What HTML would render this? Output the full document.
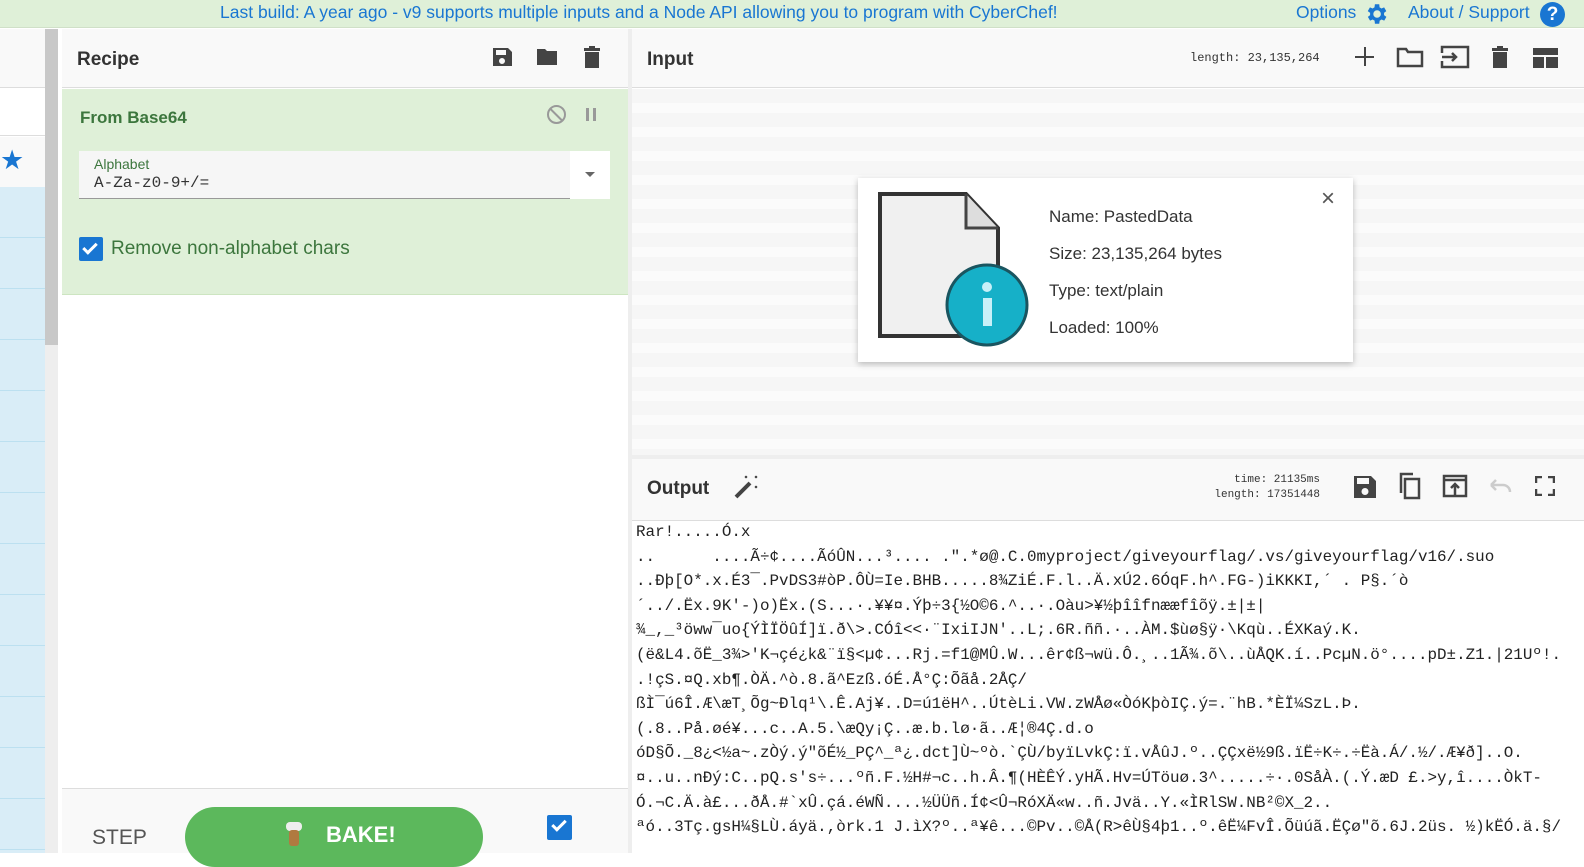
<!DOCTYPE html>
<html><head><meta charset="utf-8"><style>
*{box-sizing:border-box;margin:0;padding:0}
body{width:1584px;height:853px;overflow:hidden;font-family:"Liberation Sans",sans-serif;background:#fff;position:relative}
.abs{position:absolute}
#banner{left:0;top:0;width:1584px;height:28px;background:#dff0d8;border-bottom:1px solid #d0e0c8}
#banner span{position:absolute;top:2px;font-size:17.5px;color:#1976d2}
.mono{font-family:"Liberation Mono",monospace}
.hdr{font-size:19px;font-weight:bold;color:#333}
.out{position:absolute;left:636px;font-family:"Liberation Mono",monospace;font-size:15.9px;color:#222;white-space:pre;line-height:24.6px}
</style></head><body>
<div id="banner" class="abs">
<span style="left:220px">Last build: A year ago - v9 supports multiple inputs and a Node API allowing you to program with CyberChef!</span>
<span style="left:1296px">Options</span>
<svg class="abs" style="left:1363px;top:1px" width="26" height="26" viewBox="0 0 24 24"><path fill="#1976d2" d="M19.4 13a7.5 7.5 0 000-2l2.1-1.6-2-3.5-2.5 1a7 7 0 00-1.7-1L15 3h-4l-.4 2.9a7 7 0 00-1.7 1l-2.5-1-2 3.5L6.6 11a7.5 7.5 0 000 2l-2.1 1.6 2 3.5 2.5-1a7 7 0 001.7 1L11 21h4l.4-2.9a7 7 0 001.7-1l2.5 1 2-3.5zM13 15.5a3.5 3.5 0 110-7 3.5 3.5 0 010 7z"/></svg>
<span style="left:1408px">About / Support</span>
<div class="abs" style="left:1540px;top:2px;width:25px;height:25px;border-radius:50%;background:#1976d2;color:#fff;font-weight:bold;font-size:19px;text-align:center;line-height:25px">?</div>
</div>
<div class="abs" style="left:0;top:29px;width:45px;height:59px;background:#f9f9f9;border-bottom:1px solid #ddd"></div>
<div class="abs" style="left:0;top:89px;width:45px;height:47px;background:#fff;border-bottom:1px solid #ddd"></div>
<div class="abs" style="left:0;top:137px;width:45px;height:50px;background:#f9f9f9"></div>
<div class="abs" style="left:0;top:145px;font-size:27px;color:#1976d2">★</div>
<div class="abs" style="left:0;top:187px;width:45px;height:666px;background:repeating-linear-gradient(#d9edf7 0,#d9edf7 50px,#bce0f0 50px,#bce0f0 51px)"></div>
<div class="abs" style="left:45px;top:29px;width:13px;height:824px;background:#eee"></div>
<div class="abs" style="left:45px;top:29px;width:13px;height:316px;background:#c8c8c8"></div>
<div class="abs" style="left:62px;top:29px;width:566px;height:59px;background:#f9f9f9;border-bottom:1px solid #ddd"></div>
<div class="abs hdr" style="left:77px;top:49px">Recipe</div>
<svg class="abs" style="left:490px;top:45px" width="24" height="24" viewBox="0 0 24 24"><path fill="#444" d="M3 3h15l4 4v14H3zM6 5v5h10V5zM12 13a3 3 0 100 6 3 3 0 000-6z"/></svg>
<svg class="abs" style="left:534px;top:45px" width="26" height="24" viewBox="0 0 24 24"><path fill="#444" d="M2 4h8l2 2h10v14H2z"/></svg>
<svg class="abs" style="left:582px;top:45px" width="20" height="24" viewBox="0 0 20 24"><path fill="#444" d="M2 3h5V1h6v2h5v3H2zM3 7h14v16H3z"/></svg>
<div class="abs" style="left:62px;top:89px;width:566px;height:206px;background:#dff0d8;border-bottom:1px solid #cde5c1"></div>
<div class="abs" style="left:80px;top:108px;font-size:17px;font-weight:bold;color:#3c763d">From Base64</div>
<div class="abs" style="left:547px;top:105px;width:19px;height:19px;border:2px solid #999;border-radius:50%"></div>
<div class="abs" style="left:548px;top:114px;width:17px;height:2px;background:#999;transform:rotate(45deg)"></div>
<div class="abs" style="left:586px;top:108px;width:3px;height:13px;background:#999"></div>
<div class="abs" style="left:593px;top:108px;width:3px;height:13px;background:#999"></div>
<div class="abs" style="left:79px;top:151px;width:491px;height:48px;background:#f6f6f6;border-bottom:1px solid #999"></div>
<div class="abs" style="left:570px;top:151px;width:40px;height:48px;background:#fff"></div>
<div class="abs" style="left:585px;top:172px;border-left:5px solid transparent;border-right:5px solid transparent;border-top:5px solid #666"></div>
<div class="abs" style="left:94px;top:156px;font-size:14px;color:#3c763d">Alphabet</div>
<div class="abs mono" style="left:94px;top:174px;font-size:16px;color:#333">A-Za-z0-9+/=</div>
<div class="abs" style="left:79px;top:237px;width:24px;height:24px;background:#1976d2;border-radius:2px"></div>
<div class="abs" style="left:86px;top:240px;width:8px;height:14px;border-right:3px solid #fff;border-bottom:3px solid #fff;transform:rotate(45deg)"></div>
<div class="abs" style="left:111px;top:238px;font-size:19px;color:#3c763d">Remove non-alphabet chars</div>
<div class="abs" style="left:62px;top:296px;width:566px;height:492px;background:#fff"></div>
<div class="abs" style="left:62px;top:788px;width:566px;height:65px;background:#f9f9f9;border-top:1px solid #ddd"></div>
<div class="abs" style="left:92px;top:826px;font-size:21px;color:#555">STEP</div>
<div class="abs" style="left:185px;top:807px;width:298px;height:60px;background:#5cb85c;border-radius:30px"></div>
<div class="abs" style="left:286px;top:822px;width:16px;height:9px;background:#eee;border-radius:4px"></div>
<div class="abs" style="left:289px;top:830px;width:10px;height:16px;background:#b07a40;border-radius:3px"></div>
<div class="abs" style="left:326px;top:822px;font-size:22px;color:#fff;font-weight:bold">BAKE!</div>
<div class="abs" style="left:547px;top:815px;width:25px;height:25px;background:#1976d2;border-radius:2px"></div>
<div class="abs" style="left:555px;top:817px;width:8px;height:14px;border-right:3px solid #fff;border-bottom:3px solid #fff;transform:rotate(45deg)"></div>
<div class="abs" style="left:628px;top:29px;width:4px;height:824px;background:#eee"></div>
<div class="abs" style="left:632px;top:29px;width:952px;height:59px;background:#f9f9f9;border-bottom:1px solid #ddd"></div>
<div class="abs hdr" style="left:647px;top:49px">Input</div>
<div class="abs mono" style="left:1190px;top:51px;font-size:12px;color:#333">length: 23,135,264</div>
<div class="abs" style="left:1355px;top:56px;width:19px;height:2px;background:#444"></div>
<div class="abs" style="left:1364px;top:47px;width:2px;height:19px;background:#444"></div>
<svg class="abs" style="left:1396px;top:45px" width="28" height="24" viewBox="0 0 28 24"><path fill="none" stroke="#444" stroke-width="2.5" d="M2 4h8l2 3h14v14H2z"/></svg>
<svg class="abs" style="left:1440px;top:45px" width="30" height="24" viewBox="0 0 30 24"><path fill="none" stroke="#444" stroke-width="2.5" d="M2 8V2h26v20H2v-6M2 12h14M12 8l4 4-4 4"/></svg>
<svg class="abs" style="left:1490px;top:45px" width="20" height="24" viewBox="0 0 20 24"><path fill="#444" d="M2 3h5V1h6v2h5v3H2zM3 7h14v16H3z"/></svg>
<svg class="abs" style="left:1533px;top:48px" width="25" height="20" viewBox="0 0 25 20"><path fill="#444" d="M0 0h25v7H0zM0 9h11v11H0zM13 9h12v11H13z"/></svg>
<div class="abs" style="left:632px;top:89px;width:952px;height:366px;background:repeating-linear-gradient(#f6f6f6 0,#f6f6f6 14px,#fbfbfb 14px,#fbfbfb 24px)"></div>
<div class="abs" style="left:858px;top:178px;width:495px;height:184px;background:#fff;box-shadow:0 2px 6px rgba(0,0,0,.25)"></div>
<svg class="abs" style="left:872px;top:190px" width="160" height="160" viewBox="0 0 160 160"><path d="M8 4h86l32 34v108H8z" fill="#f0f0f0" stroke="#333" stroke-width="4"/><path d="M94 4v34h32" fill="#ddd" stroke="#444" stroke-width="3"/><circle cx="115" cy="115" r="40" fill="#16b0c8" stroke="#1a5560" stroke-width="3"/><rect x="111" y="108" width="9" height="28" fill="#c8f0f8"/><circle cx="115" cy="97" r="5" fill="#c8f0f8"/></svg>
<div class="abs" style="left:1049px;top:198px;font-size:17px;color:#333;line-height:37px">Name: PastedData<br>Size: 23,135,264 bytes<br>Type: text/plain<br>Loaded: 100%</div>
<div class="abs" style="left:1321px;top:185px;font-size:24px;color:#555">×</div>
<div class="abs" style="left:632px;top:455px;width:952px;height:4px;background:#eee"></div>
<div class="abs" style="left:632px;top:459px;width:952px;height:62px;background:#f9f9f9;border-bottom:1px solid #ddd"></div>
<div class="abs hdr" style="left:647px;top:478px">Output</div>
<svg class="abs" style="left:733px;top:474px" width="26" height="26" viewBox="0 0 26 26"><path d="M3 23L17 9" stroke="#444" stroke-width="4"/><path d="M12 2l2 2M14 2l-2 2M22 2l2 2M24 2l-2 2M22 12l2 2M24 12l-2 2" stroke="#444" stroke-width="1.2"/></svg>
<div class="abs mono" style="left:1205px;top:473px;font-size:11px;color:#333;line-height:15px;text-align:right;width:115px">time:  21135ms<br>length: 17351448</div>
<svg class="abs" style="left:1353px;top:475px" width="24" height="24" viewBox="0 0 24 24"><path fill="#444" d="M1 1h17l5 5v17H1zM4 3v6h12V3zM12 13a3.5 3.5 0 100 7 3.5 3.5 0 000-7z"/></svg>
<svg class="abs" style="left:1397px;top:472px" width="26" height="28" viewBox="0 0 26 28"><path fill="none" stroke="#444" stroke-width="2.5" d="M8 7h14v19H8zM4 21V2h12"/></svg>
<svg class="abs" style="left:1442px;top:474px" width="26" height="24" viewBox="0 0 26 24"><path fill="none" stroke="#444" stroke-width="2.5" d="M2 2h22v20H2zM13 21V10M9 14l4-4 4 4M2 6h22"/></svg>
<svg class="abs" style="left:1487px;top:477px" width="26" height="20" viewBox="0 0 26 20"><path fill="none" stroke="#ccc" stroke-width="2.5" d="M4 8h12a7 7 0 017 7M4 8l5-5M4 8l5 5"/></svg>
<svg class="abs" style="left:1535px;top:476px" width="20" height="20" viewBox="0 0 20 20"><path fill="none" stroke="#444" stroke-width="2.5" d="M1 7V1h6M13 1h6v6M19 13v6h-6M7 19H1v-6"/></svg>
<div class="out" style="top:520px">Rar!.....Ó.x
..      ....Ã÷¢....ÃóÛN...³.... .".*ø@.C.0myproject/giveyourflag/.vs/giveyourflag/v16/.suo
..Ðþ[O*.x.É3¯.PvDS3#òP.ÔÙ=Ie.BHB.....8¾ZiÉ.F.l..Ä.xÚ2.6ÓqF.h^.FG-)iKKKI,´ . P§.´ò
´../.Ëx.9K'-)o)Ëx.(S...·.¥¥¤.Ýþ÷3{½O©6.^..·.Oàu>¥½þîîfnææfîõÿ.±|±|
¾_,_³öww¯uo{ÝÌÏÖûÍ]ï.ð\&gt;.CÓî&lt;&lt;·¨IxiIJN'..L;.6R.ññ.·..ÀM.$ùø§ÿ·\Kqù..ÉXKaý.K.
(ë&amp;L4.õË_3¾&gt;'K¬çé¿k&amp;¨ï§&lt;µ¢...Rj.=f1@MÛ.W...êr¢ß¬wü.Ô.¸..1Ã¾.õ\..ùÅQK.í..PcµN.ö°....pD±.Z1.|21Uº!.
.!çS.¤Q.xb¶.ÒÄ.^ò.8.ã^Ezß.óÉ.Å°Ç:Õãå.2ÅÇ/
ßÌ¯ú6Î.Æ\æT¸Õg~Ðlq¹\.Ê.Aj¥..D=ú1ëH^..ÚtèLi.VW.zWÅø«ÒóKþòIÇ.ý=.¨hB.*ÈÏ¼SzL.Þ.
(.8..På.øé¥...c..A.5.\æQy¡Ç..æ.b.lø·ã..Æ¦®4Ç.d.o
óD§Õ._8¿&lt;½a~.zÒý.ý"õÉ½_PÇ^_ª¿.dct]Ù~ºò.`ÇÙ/byïLvkÇ:ï.vÅûJ.º..ÇÇxë½9ß.ïË÷K÷.÷Ëà.Á/.½/.Æ¥ð]..O.
¤..u..nÐý:C..pQ.s's÷...ºñ.F.½H#¬c..h.Â.¶(HÈÊÝ.yHÃ.Hv=ÚTöuø.3^.....÷·.0SåÀ.(.Ý.æD £.&gt;y,î....ÒkT-
Ó.¬C.Ä.à£...ðÅ.#`xÛ.çá.éWÑ....½ÜÜñ.Í¢&lt;Û¬RóXÄ«w..ñ.Jvä..Y.«ÌRlSW.NB²©X_2..
ªó..3Tç.gsH¼§LÙ.áyä.,òrk.1 J.ìX?º..ª¥ê...©Pv..©Å(R&gt;êÙ§4þ1..º.êË¼FvÎ.Õüúã.ËÇø"õ.6J.2üs. ½)kËÓ.ä.§/</div>
</body></html>
